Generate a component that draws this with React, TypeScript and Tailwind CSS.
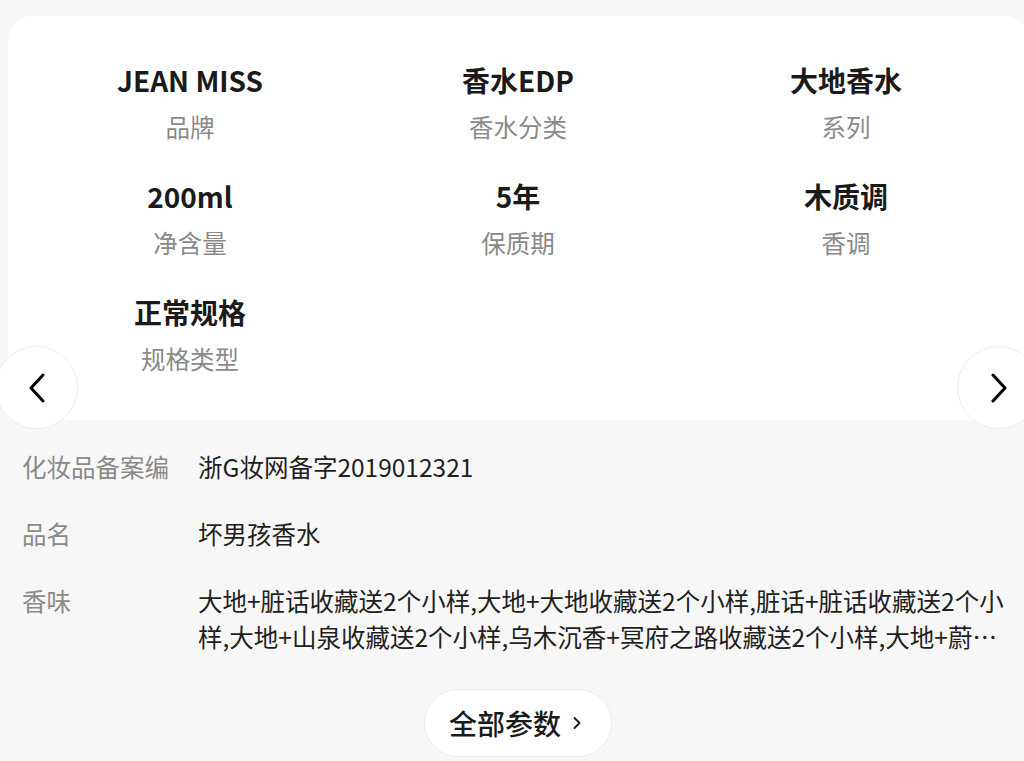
import { ChevronRight } from "lucide-react";

const specs = [
  { value: "JEAN MISS", label: "品牌" },
  { value: "香水EDP", label: "香水分类" },
  { value: "大地香水", label: "系列" },
  { value: "200ml", label: "净含量" },
  { value: "5年", label: "保质期" },
  { value: "木质调", label: "香调" },
  { value: "正常规格", label: "规格类型" },
];

const details = [
  { label: "化妆品备案编", value: "浙G妆网备字2019012321" },
  { label: "品名", value: "坏男孩香水" },
  {
    label: "香味",
    value:
      "大地+脏话收藏送2个小样,大地+大地收藏送2个小样,脏话+脏话收藏送2个小样,大地+山泉收藏送2个小样,乌木沉香+冥府之路收藏送2个小样,大地+蔚蓝收藏送2个小样,乌木沉香+乌木沉香收藏送2个小样",
  },
];

function Arrow({ dir }: { dir: "left" | "right" }) {
  return (
    <svg width="18" height="30" viewBox="0 0 18 30" fill="none">
      <polyline
        points={dir === "left" ? "15,2 3,15 15,28" : "3,2 15,15 3,28"}
        stroke="#000"
        strokeWidth="3"
        strokeLinecap="round"
        strokeLinejoin="round"
      />
    </svg>
  );
}

export default function App() {
  return (
    <div
      className="w-full min-h-screen overflow-hidden bg-[#f7f7f7]"
      style={{ fontFamily: '"Noto Sans CJK SC", "Noto Sans", sans-serif' }}
    >
      <div className="relative w-[1036px] pt-4">
        {/* 参数卡片 */}
        <div className="mx-2 rounded-t-[24px] bg-white pt-[44px] pb-[43px] px-[18px]">
          <div className="grid grid-cols-3 gap-y-[31px]">
            {specs.map((s) => (
              <div key={s.label} className="flex flex-col items-center">
                <div className="text-[28px] leading-[40px] font-bold text-[#1a1a1a]">{s.value}</div>
                <div className="mt-[9px] text-[24.5px] leading-[36px] text-[#8a8a8a]">{s.label}</div>
              </div>
            ))}
          </div>
        </div>

        {/* 左右切换 */}
        <button className="absolute left-[-5px] top-[346px] flex h-[83px] w-[83px] items-center justify-center rounded-full border border-[#ececec] bg-white">
          <Arrow dir="left" />
        </button>
        <button className="absolute right-[-4px] top-[346px] flex h-[83px] w-[83px] items-center justify-center rounded-full border border-[#ececec] bg-white">
          <Arrow dir="right" />
        </button>

        {/* 详细信息 */}
        <div className="flex flex-col gap-[31px] px-[22px] pt-[29px]">
          {details.map((d) => (
            <div key={d.label} className="flex text-[24.5px] leading-[36px]">
              <div className="w-[176px] shrink-0 text-[#8a8a8a]">{d.label}</div>
              <div className="line-clamp-2 min-w-0 flex-1 pr-[4px] text-[#1f1f1f]">{d.value}</div>
            </div>
          ))}
        </div>

        <div className="flex justify-center pt-[34px]">
          <button className="flex h-[68px] w-[188px] items-center justify-center gap-[6px] rounded-full border border-[#ececec] bg-white text-[28px] font-medium text-[#1a1a1a]">
            全部参数
            <ChevronRight size={20} strokeWidth={2.2} />
          </button>
        </div>
      </div>
    </div>
  );
}
